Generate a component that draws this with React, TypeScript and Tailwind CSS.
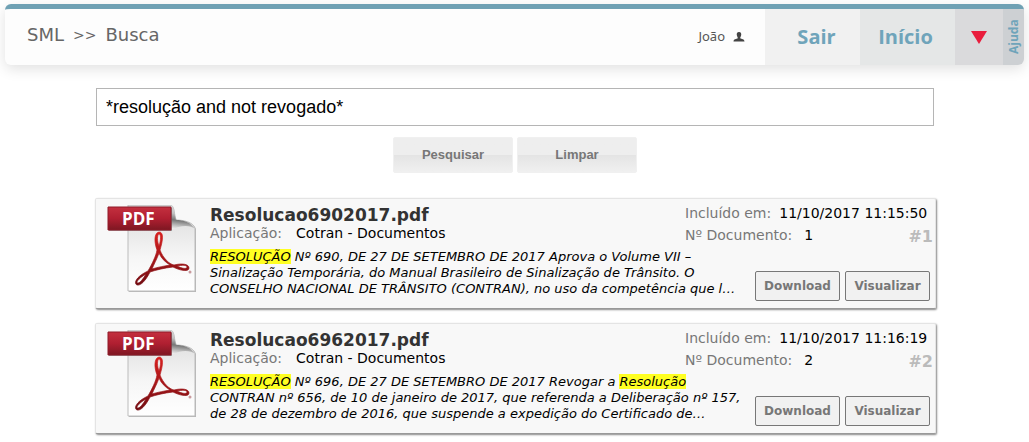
import React from 'react';

const results = [
  {
    id: 1,
    name: 'Resolucao6902017.pdf',
    app: 'Cotran - Documentos',
    date: '11/10/2017 11:15:50',
    lines: [
      [{ text: 'RESOLUÇÃO', hit: true }, { text: ' Nº 690, DE 27 DE SETEMBRO DE 2017 Aprova o Volume VII –' }],
      [{ text: 'Sinalização Temporária, do Manual Brasileiro de Sinalização de Trânsito. O' }],
      [{ text: 'CONSELHO NACIONAL DE TRÂNSITO (CONTRAN), no uso da competência que l…' }],
    ],
  },
  {
    id: 2,
    name: 'Resolucao6962017.pdf',
    app: 'Cotran - Documentos',
    date: '11/10/2017 11:16:19',
    lines: [
      [
        { text: 'RESOLUÇÃO', hit: true },
        { text: ' Nº 696, DE 27 DE SETEMBRO DE 2017 Revogar a ' },
        { text: 'Resolução', hit: true },
      ],
      [{ text: 'CONTRAN nº 656, de 10 de janeiro de 2017, que referenda a Deliberação nº 157,' }],
      [{ text: 'de 28 de dezembro de 2016, que suspende a expedição do Certificado de…' }],
    ],
  },
];

const PdfIcon = () => (
  <svg width="90" height="90" viewBox="0 0 90 90" className="shrink-0" aria-hidden="true">
    <defs>
      <linearGradient id="page" x1="0" y1="0" x2="0" y2="1">
        <stop offset="0" stopColor="#d9d9d9" />
        <stop offset="0.6" stopColor="#f6f6f6" />
        <stop offset="1" stopColor="#ffffff" />
      </linearGradient>
      <linearGradient id="fold" x1="0.5" y1="1" x2="0.6" y2="0.1">
        <stop offset="0" stopColor="#f0f0f0" />
        <stop offset="0.4" stopColor="#777777" />
        <stop offset="0.7" stopColor="#c4c4c4" />
        <stop offset="1" stopColor="#d6d6d6" />
      </linearGradient>
      <linearGradient id="tag" x1="0" y1="0" x2="0" y2="1">
        <stop offset="0" stopColor="#c4303f" />
        <stop offset="0.5" stopColor="#b01f31" />
        <stop offset="1" stopColor="#7d1722" />
      </linearGradient>
      <linearGradient id="swirl" x1="0" y1="0" x2="0" y2="1">
        <stop offset="0" stopColor="#d8201f" />
        <stop offset="1" stopColor="#720c12" />
      </linearGradient>
    </defs>
    <path d="M22 1H64C68 3 67 11 70 15C76 17 87 18 89 24V87H22Z" fill="#8a8a8a" opacity="0.6" />
    <path d="M21 0H64C68 2 67 10 69 15C76 15 86 17 88 23V86H21Z" fill="url(#page)" stroke="#bcbcbc" />
    <path d="M64 0C68 2 67 10 69 15C76 15 84 17 88 24C83 20 74 20 64 25Z" fill="url(#fold)" />
    <path d="M2 3H65V26H2Z" fill="#666666" opacity="0.6" />
    <path d="M1 2H64V25H1Z" fill="url(#tag)" stroke="#8f1a28" />
    <text x="15" y="20" className="font-['Open_Sans',sans-serif] text-[17px] font-bold" fill="#ffffff">PDF</text>
    <path
      fillRule="evenodd"
      fill="url(#swirl)"
      stroke="url(#swirl)"
      strokeWidth="0.7"
      d="M52 27C57 27 56 35 53 45C56 53 62 59 67 60C75 58 82 59 82 63C82 67 74 66 66 62C57 63 49 65 43 67C39 75 34 81 30 80C26 78 30 71 41 66C45 59 49 51 50 45C47 37 47 28 52 27ZM52 29C50 30 50 36 52 41C54 35 54 29 52 29ZM52 48C50 54 47 59 45 64C51 62 58 61 63 60C58 57 54 53 52 48ZM70 61C76 64 80 64 80 62C80 60 75 60 70 61ZM39 69C32 73 28 78 31 78C33 78 36 74 39 69Z"
    />
    <circle cx="83" cy="67" r="1.5" fill="#c99a9e" />
  </svg>
);

const ResultCard = ({ item }: any) => {
  const button = 'h-[30px] w-[85px] rounded-xs border border-[#777] bg-[#f1f1f1] text-xs font-bold text-[#777]';

  return (
    <article className="flex min-h-[111px] rounded-xs border border-[#e4e4e4] border-b-[#999] bg-[#f8f8f8] pt-[6px] pl-[11px] shadow-[1px_1px_2px_#888]">
      <PdfIcon />
      <div className="flex min-w-0 flex-1 flex-col pl-[13px]">
        <div className="flex justify-between">
          <div>
            <h2 className="text-[17px] leading-5 font-bold text-[#333]">{item.name}</h2>
            <p className="flex gap-[14px] text-sm leading-4 text-[#777]">
              Aplicação: <span className="text-black">{item.app}</span>
            </p>
          </div>
          <div className="w-[250px] text-sm leading-4 whitespace-nowrap text-[#777]">
            <p className="flex gap-2">Incluído em: <span className="text-black">{item.date}</span></p>
            <p className="flex pt-1.5 pr-0.5">
              Nº Documento: <span className="pl-3 text-black">{item.id}</span>
              <span className="ml-auto text-base leading-5 font-bold text-[#bbb]">#{item.id}</span>
            </p>
          </div>
        </div>
        <div className="flex flex-1 justify-between">
          <p className="pt-0.5 text-[13px] leading-4 whitespace-nowrap text-black italic">
            {item.lines.map((line: any, i: any) => (
              <span key={i} className="block">
                {line.map((part: any, j: any) =>
                  part.hit ? <mark key={j} className="bg-[#ff2] text-black">{part.text}</mark> : <React.Fragment key={j}>{part.text}</React.Fragment>
                )}
              </span>
            ))}
          </p>
          <div className="flex gap-[5px] self-end pr-[5px] pb-[7px]">
            <button className={button}>Download</button>
            <button className={button}>Visualizar</button>
          </div>
        </div>
      </div>
    </article>
  );
};

const App = () => {
  const action = 'h-9 w-[120px] rounded-xs border border-[#f0f0f0] bg-linear-to-b from-[#eeeeee] from-50% via-[#e4e4e4] via-50% to-[#f0f0f0] font-["Liberation_Sans",Arial,sans-serif] text-[13px] font-bold text-[#777]';

  return (
    <div className="min-h-screen bg-white pt-1 font-['DejaVu_Sans',Verdana,sans-serif]">
      <header className="mx-[5px] flex h-[61px] overflow-hidden rounded-md border-t-[5px] border-[#6fa1b4] bg-[#fdfdfd] shadow-[0_4px_14px_#0000001f]">
        <h1 className="flex flex-1 gap-[9px] pt-3 pl-[22px] text-[18px] leading-7 text-[#666]">
          SML <span className="text-sm leading-7">&gt;&gt;</span> Busca
        </h1>
        <div className="flex items-center gap-2 pr-5 font-['Noto_Sans',sans-serif] text-[13px] text-[#555]">
          João
          <svg width="12" height="10" viewBox="0 0 12 10" fill="#444" aria-hidden="true">
            <path d="M6 0C8 0 8.500 1.500 8.200 3C8 4.500 7.200 5 7.200 6.200C8.500 7 11.500 7 11.500 9.500H0.500C0.500 7 3.500 7 4.800 6.200C4.800 5 4 4.500 3.800 3C3.500 1.500 4 0 6 0Z" />
          </svg>
        </div>
        <nav className="flex font-['Open_Sans',sans-serif] text-xl font-bold text-[#6fa4ba]">
          <a href="#sair" className="flex w-[95px] items-center justify-center bg-[#f1f1f1] pl-2">Sair</a>
          <a href="#inicio" className="flex w-[95px] items-center justify-center bg-[#e5e7e7] pr-1">Início</a>
          <button aria-label="Menu" className="flex w-12 items-center justify-center bg-[#dadadc]">
            <svg width="16" height="13" viewBox="0 0 16 13" fill="#e91d3d"><path d="M0 0H16L8 13Z" /></svg>
          </button>
          <a href="#ajuda" className="flex w-[21px] rotate-180 items-center justify-center bg-[#cdd0d3] text-xs [writing-mode:vertical-rl]">Ajuda</a>
        </nav>
      </header>

      <main className="pt-[23px] pr-[93px] pl-[95px]">
        <form className="pr-0.5 pl-px" onSubmit={(e) => e.preventDefault()}>
          <input
            type="text"
            aria-label="Busca"
            defaultValue="*resolução and not revogado*"
            className="block h-[38px] w-full border border-[#b5b5b5] bg-white px-[9px] font-['Liberation_Sans',Arial,sans-serif] text-[18px] text-black outline-none"
          />
          <div className="flex justify-center gap-1 pt-[11px]">
            <button type="submit" className={action}>Pesquisar</button>
            <button type="reset" className={action}>Limpar</button>
          </div>
        </form>
        <section className="flex flex-col gap-[14px] pt-[25px]">
          {results.map((item: any) => <ResultCard key={item.id} item={item} />)}
        </section>
      </main>
    </div>
  );
};

export default App;
